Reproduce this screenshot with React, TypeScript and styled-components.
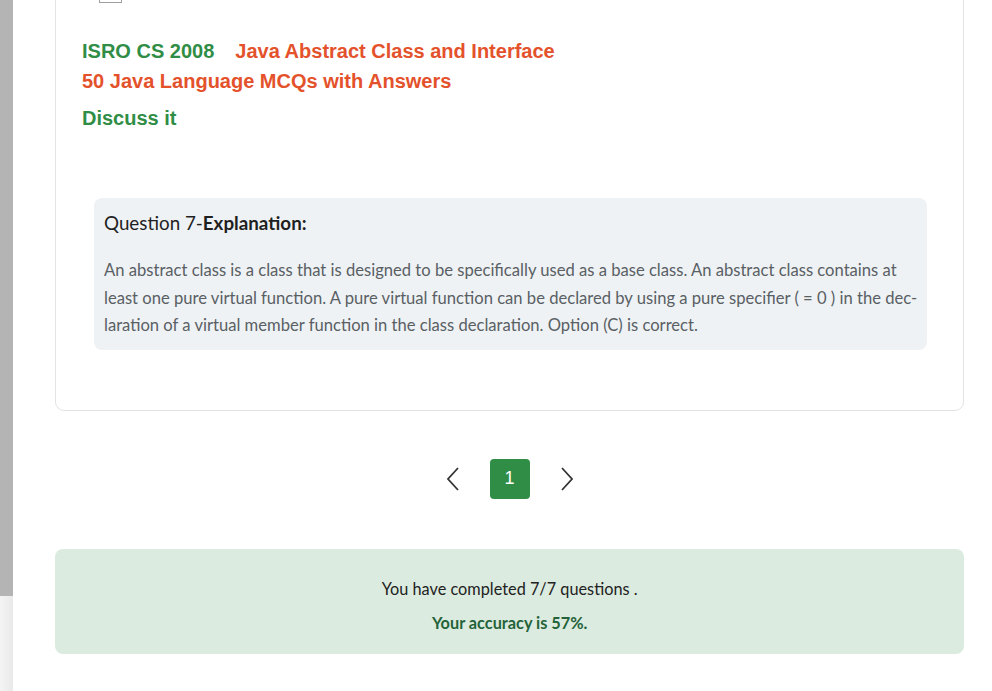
import styled, { createGlobalStyle } from "styled-components";

const GlobalStyle = createGlobalStyle`
  html, body {
    margin: 0;
    padding: 0;
    background: #ffffff;
    overflow: hidden;
  }
`;

const Page = styled.div`
  display: flex;
  height: 691px;
  overflow: hidden;
`;

const Rail = styled.div`
  width: 13px;
  flex-shrink: 0;
  display: flex;
  flex-direction: column;
  background: linear-gradient(90deg, #f4f4f4, #e9e9e9);
`;

const Thumb = styled.div`
  height: 596px;
  background: #b4b4b4;
`;

const Main = styled.main`
  flex: 1;
  padding: 0 28px 0 42px;
  font-family: "Lato", "Liberation Sans", sans-serif;
`;

const Card = styled.section`
  margin-top: -30px;
  border: 1px solid #e3e3e3;
  border-radius: 9px;
  padding: 0 27px 60px 26px;
`;

const ToolRow = styled.div`
  height: 32px;
  display: flex;
  align-items: flex-end;
  padding-left: 17px;
`;

const ToolBox = styled.span`
  width: 23px;
  height: 20px;
  border: 1px solid #9e9e9e;
  box-sizing: border-box;
`;

const TagRow = styled.div`
  margin-top: 33px;
  display: flex;
  flex-wrap: wrap;
  column-gap: 21px;
`;

const Tag = styled.a<{ $tone: "green" | "orange" }>`
  font-family: "Liberation Sans", Arial, sans-serif;
  font-weight: 700;
  font-size: 20px;
  line-height: 30px;
  text-decoration: none;
  color: ${(p) => (p.$tone === "green" ? "#2f8d46" : "#e4522c")};
`;

const Discuss = styled(Tag)`
  display: block;
  margin-top: 7px;
`;

const Explanation = styled.div`
  margin: 65px 9px 0 12px;
  background: #eef2f5;
  border-radius: 8px;
  padding: 12px 10px 10px 10px;
`;

const ExplTitle = styled.h3`
  margin: 0;
  font-size: 18.8px;
  line-height: 26px;
  font-weight: 400;
  color: #1f1f1f;

  b {
    font-weight: 700;
  }
`;

const ExplBody = styled.p`
  margin: 21px 0 0;
  font-size: 16.6px;
  line-height: 27.5px;
  color: #5a5f64;
  white-space: nowrap;
`;

const Pager = styled.nav`
  margin-top: 48px;
  display: flex;
  justify-content: center;
  align-items: center;
  gap: 17px;
`;

const ArrowButton = styled.button`
  width: 40px;
  height: 40px;
  border: none;
  background: transparent;
  padding: 0;
  display: flex;
  align-items: center;
  justify-content: center;
  cursor: pointer;
`;

const PageNumber = styled.button<{ $active?: boolean }>`
  width: 40px;
  height: 40px;
  border: none;
  border-radius: 4px;
  background: ${(p) => (p.$active ? "#2f8d46" : "transparent")};
  color: ${(p) => (p.$active ? "#ffffff" : "#333")};
  font-family: "Liberation Sans", Arial, sans-serif;
  font-size: 18px;
  cursor: pointer;
`;

const Result = styled.div`
  margin-top: 50px;
  background: #dcebdf;
  border-radius: 8px;
  padding: 28px 20px 19px;
  text-align: center;
  font-size: 16.3px;
  line-height: 24px;

  p {
    margin: 0;
    color: #222;
  }

  p + p {
    margin-top: 10px;
    font-weight: 700;
    color: #24633a;
  }
`;

function Chevron({ dir }: { dir: "left" | "right" }) {
  return (
    <svg width="14" height="24" viewBox="0 0 14 24" fill="none">
      <polyline
        points={dir === "left" ? "12,1 2,12 12,23" : "2,1 12,12 2,23"}
        stroke="#333"
        strokeWidth="1.8"
        strokeLinejoin="miter"
      />
    </svg>
  );
}

export default function App() {
  return (
    <>
      <GlobalStyle />
      <Page>
        <Rail>
          <Thumb />
        </Rail>
        <Main>
          <Card>
            <ToolRow>
              <ToolBox />
            </ToolRow>
            <TagRow>
              <Tag $tone="green" href="#">ISRO CS 2008</Tag>
              <Tag $tone="orange" href="#">Java Abstract Class and Interface</Tag>
            </TagRow>
            <Tag $tone="orange" href="#">50 Java Language MCQs with Answers</Tag>
            <Discuss $tone="green" href="#">Discuss it</Discuss>

            <Explanation>
              <ExplTitle>
                Question 7-<b>Explanation:</b>
              </ExplTitle>
              <ExplBody>
                An abstract class is a class that is designed to be specifically used as a base class. An abstract class contains at
                <br />
                least one pure virtual function. A pure virtual function can be declared by using a pure specifier ( = 0 ) in the dec-
                <br />
                laration of a virtual member function in the class declaration. Option (C) is correct.
              </ExplBody>
            </Explanation>
          </Card>

          <Pager>
            <ArrowButton aria-label="previous">
              <Chevron dir="left" />
            </ArrowButton>
            <PageNumber $active>1</PageNumber>
            <ArrowButton aria-label="next">
              <Chevron dir="right" />
            </ArrowButton>
          </Pager>

          <Result>
            <p>You have completed 7/7 questions .</p>
            <p>Your accuracy is 57%.</p>
          </Result>
        </Main>
      </Page>
    </>
  );
}
